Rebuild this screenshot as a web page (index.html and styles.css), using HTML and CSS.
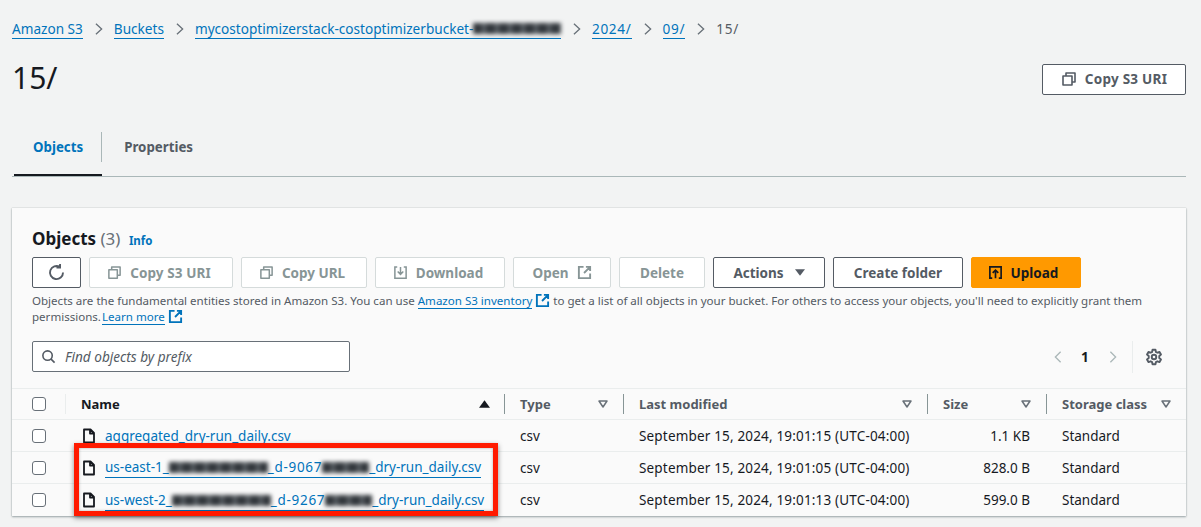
FILE: index.html
```html
<!DOCTYPE html>
<html lang="en">
<head>
<meta charset="utf-8">
<title>15/ - Amazon S3</title>
<link rel="stylesheet" href="styles.css">
</head>
<body>
<svg class="defs" width="0" height="0" aria-hidden="true">
  <symbol id="copy" viewBox="0 0 16 16"><path d="M5 4.500V2h9v9h-2.500M2 5h9v9H2z" fill="none" stroke="currentColor" stroke-width="1.600" stroke-linejoin="round"/></symbol>
  <symbol id="ext" viewBox="0 0 16 16"><path d="M7 2H2v12h12V9M9.500 2H14v4.500M14 2 7.500 8.500" fill="none" stroke="currentColor" stroke-width="2"/></symbol>
  <symbol id="file" viewBox="0 0 16 16"><path d="M3 1.500h6.500L13 5v9.500H3zM9 1.500V5.500h4" fill="none" stroke="currentColor" stroke-width="1.800" stroke-linejoin="round"/></symbol>
  <symbol id="filter" viewBox="0 0 10 8"><path d="M1 1h8L5 7z" fill="none" stroke="currentColor" stroke-width="1.500" stroke-linejoin="round"/></symbol>
</svg>
<main class="page">
  <nav class="crumbs">
    <a href="#">Amazon S3</a><svg class="sep" viewBox="0 0 10 16"><path d="M1.500 2 8 8l-6.500 6"/></svg>
    <a href="#">Buckets</a><svg class="sep" viewBox="0 0 10 16"><path d="M1.500 2 8 8l-6.500 6"/></svg>
    <a href="#" class="bucket">mycostoptimizerstack-costoptimizerbucket-<span class="blur blur-b"></span></a><svg class="sep" viewBox="0 0 10 16"><path d="M1.500 2 8 8l-6.500 6"/></svg>
    <a href="#" class="num">2024/</a><svg class="sep" viewBox="0 0 10 16"><path d="M1.500 2 8 8l-6.500 6"/></svg>
    <a href="#" class="num">09/</a><svg class="sep" viewBox="0 0 10 16"><path d="M1.500 2 8 8l-6.500 6"/></svg>
    <span class="current num">15/</span>
  </nav>

  <header class="title-row">
    <h1>15/</h1>
    <button class="btn normal copy-top"><svg class="ico"><use href="#copy"/></svg>Copy S3 URI</button>
  </header>

  <div class="tabs">
    <a href="#" class="tab active">Objects</a>
    <a href="#" class="tab">Properties</a>
  </div>

  <section class="card">
    <div class="card-head">
      <h2>Objects <span class="count">(3)</span> <a href="#" class="info">Info</a></h2>
      <div class="actions">
        <button class="btn normal w-refresh"><svg class="ico big" viewBox="0 0 16 16"><path d="M13.500 8A5.500 5.500 0 1 1 10.800 3.300M11 .8v3h-3" fill="none" stroke="currentColor" stroke-width="1.600"/></svg></button>
        <button class="btn off lead w-s3"><svg class="ico"><use href="#copy"/></svg>Copy S3 URI</button>
        <button class="btn off lead w-url"><svg class="ico"><use href="#copy"/></svg>Copy URL</button>
        <button class="btn off lead w-dl"><svg class="ico" viewBox="0 0 16 16"><path d="M4.500 2H2v12h12V2h-2.500M8 2v7.500M5 7l3 3 3-3" fill="none" stroke="currentColor" stroke-width="1.600"/></svg>Download</button>
        <button class="btn off w-open">Open<svg class="ico after"><use href="#ext"/></svg></button>
        <button class="btn off w-del">Delete</button>
        <button class="btn normal w-act">Actions<svg class="caret" viewBox="0 0 12 8"><path d="M0 0h12L6 8z"/></svg></button>
        <button class="btn normal w-new">Create folder</button>
        <button class="btn primary lead w-up"><svg class="ico" viewBox="0 0 16 16"><path d="M4.500 2H2v12h2.500M11.500 2H14v12h-2.500M2 2h12M8 14V6M5 8.500l3-3 3 3" fill="none" stroke="currentColor" stroke-width="1.800"/></svg>Upload</button>
      </div>
      <div class="desc">
        <p>Objects are the fundamental entities stored in Amazon S3. You can use <a href="#">Amazon S3 inventory</a><svg class="ico-inline"><use href="#ext"/></svg> to get a list of all objects in your bucket. For others to access your objects, you'll need to explicitly grant them</p>
        <p>permissions. <a href="#" class="learn">Learn more</a><svg class="ico-inline"><use href="#ext"/></svg></p>
      </div>
      <div class="tools">
        <label class="search">
          <svg class="ico" viewBox="0 0 16 16"><circle cx="7" cy="7" r="5" fill="none" stroke="currentColor" stroke-width="1.700"/><path d="m10.500 10.500 4 4" stroke="currentColor" stroke-width="1.700"/></svg>
          <span>Find objects by prefix</span>
        </label>
        <div class="pager">
          <svg class="chev" viewBox="0 0 10 16"><path d="M8 2 2 8l6 6"/></svg>
          <b>1</b>
          <svg class="chev" viewBox="0 0 10 16"><path d="m2 2 6 6-6 6"/></svg>
          <i class="divider"></i>
          <svg class="gear" viewBox="0 0 16 16"><path d="M6.700 1.500h2.600l.4 2 1.300.7 1.900-.7 1.300 2.300-1.500 1.300v1.800l1.500 1.300-1.300 2.300-1.900-.7-1.300.7-.4 2H6.700l-.4-2-1.300-.7-1.900.7-1.300-2.300 1.500-1.300V7.100L1.800 5.800l1.300-2.300 1.900.7 1.300-.7z" fill="none" stroke="currentColor" stroke-width="1.700" stroke-linejoin="round"/><circle cx="8" cy="8" r="2" fill="none" stroke="currentColor" stroke-width="1.700"/></svg>
        </div>
      </div>
    </div>

    <div class="table">
      <div class="row thead">
        <div class="c-check"><span class="box"></span><i class="thin"></i></div>
        <div class="c-name">Name<svg class="sorted" viewBox="0 0 12 8"><path d="M6 0l6 8H0z"/></svg></div>
        <div class="c-type">Type<svg class="filter"><use href="#filter"/></svg></div>
        <div class="c-mod">Last modified<svg class="filter"><use href="#filter"/></svg></div>
        <div class="c-size">Size<svg class="filter"><use href="#filter"/></svg></div>
        <div class="c-store">Storage class<svg class="filter"><use href="#filter"/></svg></div>
      </div>
      <div class="row">
        <div class="c-check"><span class="box"></span></div>
        <div class="c-name"><svg class="file"><use href="#file"/></svg><a href="#" class="plain">aggregated_dry-run_daily.csv</a></div>
        <div class="c-type">csv</div>
        <div class="c-mod">September 15, 2024, 19:01:15 (UTC-04:00)</div>
        <div class="c-size">1.1 KB</div>
        <div class="c-store">Standard</div>
      </div>
      <div class="row">
        <div class="c-check"><span class="box"></span></div>
        <div class="c-name"><svg class="file"><use href="#file"/></svg><a href="#">us-east-1_<span class="blur blur-1"></span><span class="num">_d-9067</span><span class="blur blur-2"></span>_dry-run_daily.csv</a></div>
        <div class="c-type">csv</div>
        <div class="c-mod">September 15, 2024, 19:01:05 (UTC-04:00)</div>
        <div class="c-size">828.0 B</div>
        <div class="c-store">Standard</div>
      </div>
      <div class="row last">
        <div class="c-check"><span class="box"></span></div>
        <div class="c-name"><svg class="file"><use href="#file"/></svg><a href="#">us-west-2_<span class="blur blur-1"></span><span class="num">_d-9267</span><span class="blur blur-2"></span>_dry-run_daily.csv</a></div>
        <div class="c-type">csv</div>
        <div class="c-mod">September 15, 2024, 19:01:13 (UTC-04:00)</div>
        <div class="c-size">599.0 B</div>
        <div class="c-store">Standard</div>
      </div>
      <div class="highlight"></div>
    </div>
  </section>
</main>
</body>
</html>
```
FILE: styles.css
```css
* { box-sizing: border-box; }
html, body { margin: 0; padding: 0; }
body {
  width: 1201px; height: 527px; overflow: hidden;
  background: #f2f3f3; color: #16191f;
  font: 13.6px/20px "Noto Sans", "Open Sans", sans-serif;
}
.defs { position: absolute; }
a { color: #0073bb; text-decoration: none; border-bottom: 1px solid #0073bb; }
button { font: inherit; }
.page { padding: 19px 15px 0 12px; }
.num { letter-spacing: .7px; }

.crumbs { display: flex; align-items: center; height: 20px; white-space: nowrap; }
.crumbs a { line-height: 18px; }
.crumbs .sep { width: 10px; height: 14px; margin: 0 10px 0 11px; fill: none; stroke: #687078; stroke-width: 1.500; }
.bucket { display: inline-flex; align-items: center; width: 366px; overflow: visible; }
.current { color: #545b64; }

.title-row { display: flex; justify-content: space-between; align-items: center; height: 40px; margin-top: 19px; }
h1 { margin: 0; font-size: 30px; line-height: 36px; font-weight: 400; }
.copy-top { width: 144px; margin-top: 2px; padding-right: 3px; letter-spacing: .25px; }
.copy-top .ico { width: 16px; height: 16px; }

.tabs { display: flex; height: 62px; margin-top: 17px; border-bottom: 1px solid #aab7b8; padding-top: 17px; }
.tab { border: 0; height: 44px; padding: 0 21px 0 22px; font-weight: 700; font-size: 13.300px; line-height: 30px; color: #545b64; }
.tab.active { color: #0073bb; position: relative; margin-left: 2px; padding: 0 19px; box-shadow: inset 0 -2px 0 #16191f; }
.tab.active::after { content: ""; position: absolute; right: 0; top: 0; height: 30px; width: 1px; background: #aab7b8; }

.card { margin-top: 31px; background: #fafafa; box-shadow: 0 1px 2px rgba(0,28,36,.35), 0 0 1px rgba(0,28,36,.25); height: 308px; }
.card-head { padding: 20px 20px 0; height: 180px; }
h2 { margin: 0; height: 22px; font-size: 17px; line-height: 22px; font-weight: 700; }
.count { font-weight: 400; color: #687078; }
.info { border: 0; font-size: 11.500px; margin-left: 4px; line-height: 1; }

.actions { display: flex; gap: 8px; margin-top: 7px; }
.btn { display: inline-flex; align-items: center; justify-content: center; height: 31px; padding: 0; border-radius: 2px; font-weight: 700; font-size: 13.500px; white-space: nowrap; }
.lead { padding-right: 4px; }
.normal { background: #fff; border: 1px solid #545b64; color: #545b64; }
.off { background: #fff; border: 1px solid #d5dbdb; color: #879596; }
.primary { background: #ff9900; border: 1px solid #ff9900; color: #16191f; }
.ico { width: 15px; height: 15px; margin-right: 8px; flex: none; }
.ico.after { margin: 0 0 0 8px; }
.ico.big { width: 19px; height: 19px; margin: 0; }
.caret { width: 10px; height: 7px; margin-left: 11px; fill: #545b64; }
.w-refresh { width: 49px; }
.w-s3 { width: 144px; letter-spacing: .1px; }
.w-url { width: 126px; }
.w-dl { width: 130px; }
.w-open { width: 98px; }
.w-del { width: 86px; }
.w-act { width: 112px; }
.w-new { width: 130px; }
.w-up { width: 110px; padding-right: 6px; }

.desc { margin-top: 5px; font-size: 11.560px; line-height: 16px; color: #545b64; white-space: nowrap; }
.desc p { margin: 0; }
.learn { margin-left: -2px; }
.ico-inline { width: 15px; height: 15px; vertical-align: -3px; margin-left: 3px; color: #0073bb; }

.tools { display: flex; justify-content: space-between; align-items: center; margin-top: 16px; height: 31px; }
.search { display: flex; align-items: center; width: 318px; height: 31px; padding: 0 8px; background: #fff; border: 1px solid #687078; border-radius: 2px; font-style: italic; color: #545b64; }
.search .ico { margin-right: 9px; }
.pager { display: flex; align-items: center; height: 32px; }
.pager b { width: 14px; margin: 0 16px 0 15px; text-align: center; font-weight: 700; }
.chev { width: 10px; height: 14px; fill: none; stroke: #aab7b8; stroke-width: 1.500; }
.divider { width: 1px; height: 32px; background: #eaeded; margin: 0 12px 0 14px; }
.gear { width: 18px; height: 18px; color: #545b64; margin-right: 3px; }

.table { position: relative; }
.row { display: grid; grid-template-columns: 54px 438px 119px 304px 119px 140px; height: 32px; align-items: center; border-bottom: 1px solid #eaeded; font-size: 13.500px; }
.row.last { border-bottom: 0; }
.thead { background: #fafafa; border-top: 1px solid #eaeded; font-size: 13px; font-weight: 700; color: #545b64; }
.row > div { display: flex; align-items: center; height: 100%; position: relative; white-space: nowrap; }
.c-check { padding-left: 20px; }
.thin { position: absolute; right: 0; top: 5px; width: 1px; height: 20px; background: #eaeded; }
.box { width: 14px; height: 14px; background: #fff; border: 1px solid #687078; border-radius: 3px; }
.c-name { padding-left: 15px; }
.thead .c-name { color: #16191f; }
.c-type, .c-mod, .c-store { padding-left: 16px; }
.c-mod { letter-spacing: .17px; }
.thead .c-mod { letter-spacing: 0; }
.c-size { justify-content: flex-end; padding-right: 16px; }
.thead .c-size { justify-content: flex-start; padding: 0 0 0 16px; }
.thead .c-type::before, .thead .c-mod::before, .thead .c-size::before, .thead .c-store::before {
  content: ""; position: absolute; left: 0; top: 5px; width: 1px; height: 20px; background: #879596;
}
.sorted { position: absolute; right: 14px; top: 11px; width: 11px; height: 8px; fill: #16191f; }
.filter { position: absolute; right: 15px; top: 11px; width: 10px; height: 8px; color: #687078; }
.file { width: 16px; height: 16px; margin-right: 8px; color: #16191f; }
.plain { border-bottom: 0; }

.blur { display: inline-block; background: repeating-linear-gradient(90deg, #33383d 0 9px, #5a6065 9px 13px); filter: blur(2px); height: 11px; vertical-align: -1px; }
.blur-b { width: 92px; }
.blur-1 { width: 99px; }
.blur-2 { width: 47px; }

.highlight { position: absolute; left: 62px; top: 55px; width: 424px; height: 73px; border: 5px solid #ff1a00; box-shadow: 0 2px 5px rgba(0,0,0,.45), inset 0 0 3px rgba(0,0,0,.3); pointer-events: none; }
```
